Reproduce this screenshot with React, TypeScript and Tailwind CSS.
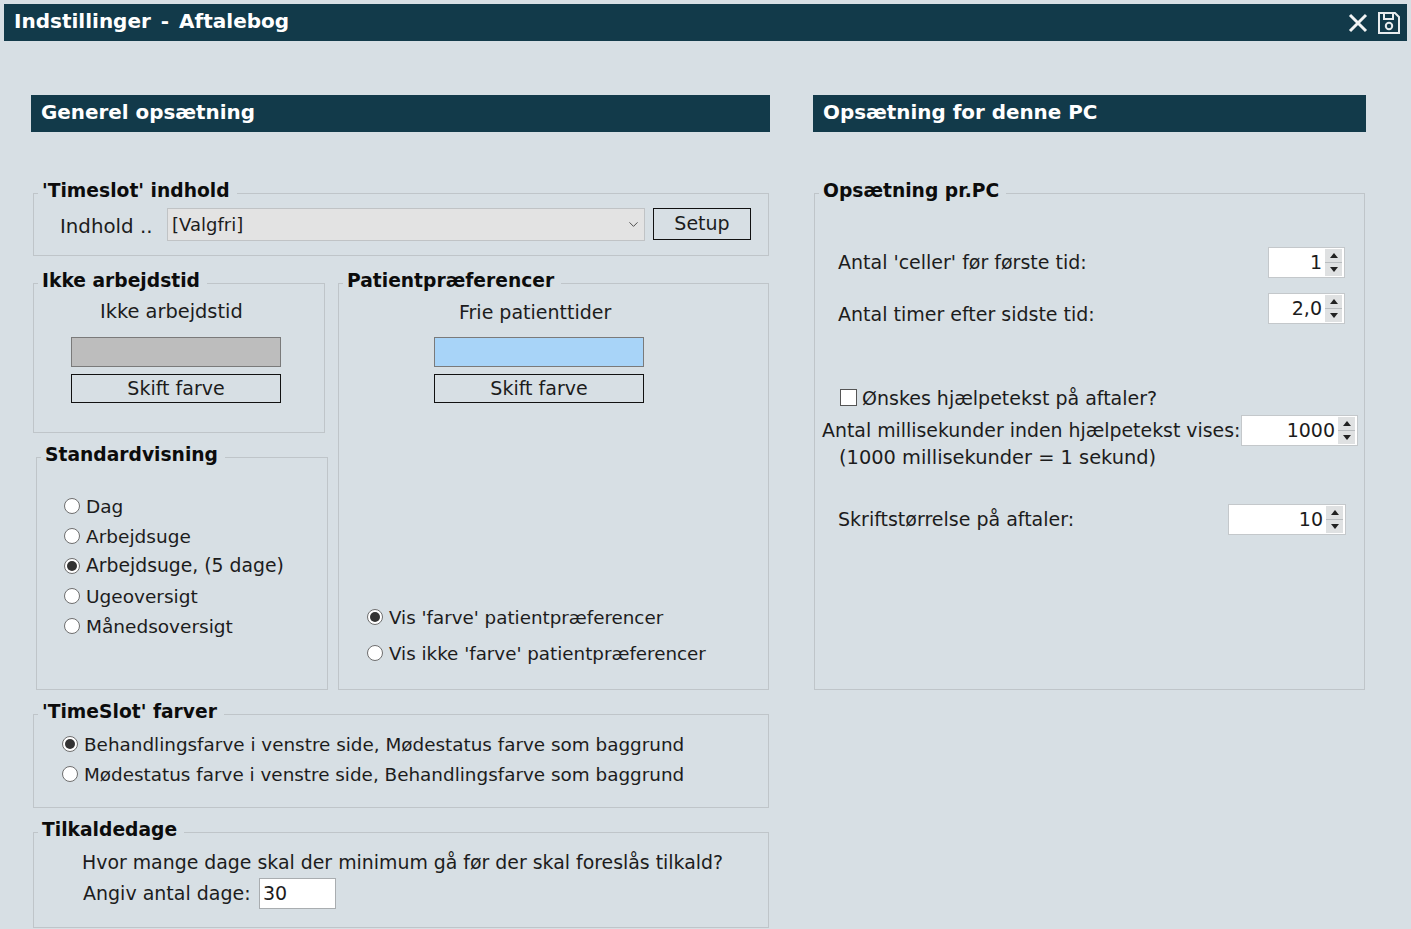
import React from 'react';
import { ChevronDown } from 'lucide-react';

const Group: React.FC<{ title: string; className: string; children?: React.ReactNode }> = ({ title, className, children }) => (
  <fieldset className={`min-w-0 border border-[#bfc5c9] ${className}`}>
    <legend className="ml-[4px] pl-[4px] pr-[7px] h-[24px] leading-[20px] font-bold text-[#0c0c0c] text-[18.7px]">{title}</legend>
    {children}
  </fieldset>
);

const SectionHeader: React.FC<{ title: string }> = ({ title }) => (
  <div className="h-[37px] bg-[#123a4a] text-white font-bold text-[19.9px] leading-[36px] pl-[10px]">{title}</div>
);

const Radio: React.FC<{ label: string; checked?: boolean; className?: string }> = ({ label, checked, className = '' }) => (
  <div className={`flex items-center h-[30px] ${className}`}>
    <span className="w-[16px] h-[16px] rounded-full bg-white border border-[#6e6e6e] flex items-center justify-center mr-[6px]">
      {checked && <span className="w-[10px] h-[10px] rounded-full bg-[#333]" />}
    </span>
    <span className="mt-[1px]">{label}</span>
  </div>
);

const ColorPicker: React.FC<{ label: string; color: string; className: string; labelClass: string }> = ({ label, color, className, labelClass }) => (
  <div className={className}>
    <div className={`h-[24px] leading-[24px] ${labelClass}`}>{label}</div>
    <div className={`w-[210px] h-[30px] mt-[13px] border border-[#7a7a7a] ${color}`} />
    <div className="w-[210px] h-[29px] mt-[7px] border border-[#111] text-center leading-[27px]">Skift farve</div>
  </div>
);

const Spinner: React.FC<{ value: string; className: string }> = ({ value, className }) => (
  <div className={`h-[31px] bg-white border border-[#c4c8cb] flex items-center justify-end pr-[2px] ${className}`}>
    <span className="mr-[3px]">{value}</span>
    <div className="w-[17px] h-[27px] flex flex-col gap-[1px] bg-[#b9bdc0]">
      <div className="flex-1 bg-[#dfe1e2] flex items-center justify-center">
        <span className="w-0 h-0 border-x-[4px] border-x-transparent border-b-[5px] border-b-[#222]" />
      </div>
      <div className="flex-1 bg-[#dfe1e2] flex items-center justify-center">
        <span className="w-0 h-0 border-x-[4px] border-x-transparent border-t-[5px] border-t-[#222]" />
      </div>
    </div>
  </div>
);

const App: React.FC = () => {
  return (
    <div className="w-[1411px] h-[929px] overflow-hidden bg-[#d7dfe4] text-[#1c1c1c] text-[19px] font-['DejaVu_Sans',sans-serif] pt-[4px] px-[4px]">
      {/* Title bar */}
      <div className="h-[37px] bg-[#123a4a] text-white flex items-center pl-[10px] pr-[6px]">
        <span className="font-bold text-[20px] [word-spacing:3px] flex-1 -mt-[3px]">Indstillinger - Aftalebog</span>
        <svg width="22" height="22" viewBox="0 0 22 22" fill="none" stroke="#f2f4f5" strokeWidth="3" className="mr-[8px]">
          <path d="M3 3 L19 19 M19 3 L3 19" />
        </svg>
        <svg width="24" height="24" viewBox="0 0 24 24" fill="none" stroke="#e8ecee" strokeWidth="2">
          <path d="M2 2 H18 L22 6 V22 H2 Z" />
          <path d="M7 2 V8 H16 V2" />
          <circle cx="12" cy="15" r="3.2" />
        </svg>
      </div>

      <div className="flex ml-[27px] mt-[54px]">
        {/* Left column */}
        <div className="w-[739px]">
          <SectionHeader title="Generel opsætning" />

          <Group title="'Timeslot' indhold" className="ml-[2px] w-[736px] h-[75px] mt-[49px]">
            <div className="flex items-start mt-[3px]">
              <span className="ml-[26px] w-[107px] mt-[7px] leading-[24px] text-[19.8px]">Indhold ..</span>
              <div className="w-[478px] h-[33px] bg-[#e3e3e3] border border-[#c0c3c5] flex items-center justify-between pl-[4px] pr-[3px]">
                <span className="-mt-[1px] text-[18px]">[Valgfri]</span>
                <ChevronDown size={15} strokeWidth={1.5} className="text-[#444]" />
              </div>
              <div className="w-[98px] h-[32px] ml-[8px] border border-[#111] text-center leading-[29px]">Setup</div>
            </div>
          </Group>

          <div className="flex mt-[15px]">
            <div className="w-[307px]">
              <Group title="Ikke arbejdstid" className="ml-[2px] w-[292px] h-[162px]">
                <ColorPicker label="Ikke arbejdstid" color="bg-[#bdbdbd]" className="ml-[37px]" labelClass="ml-[29px] mt-[5px] text-[19.4px]" />
              </Group>
              <Group title="Standardvisning" className="ml-[5px] w-[292px] h-[245px] mt-[12px]">
                <div className="ml-[27px] mt-[22px] text-[18.5px]">
                  <Radio label="Dag" />
                  <Radio label="Arbejdsuge" />
                  <Radio label="Arbejdsuge, (5 dage)" checked className="text-[18.8px]" />
                  <Radio label="Ugeoversigt" />
                  <Radio label="Månedsoversigt" />
                </div>
              </Group>
            </div>
            <Group title="Patientpræferencer" className="w-[431px] h-[419px]">
              <ColorPicker label="Frie patienttider" color="bg-[#a8d4f8]" className="ml-[95px]" labelClass="ml-[25px] mt-[5px]" />
              <div className="ml-[28px] mt-[196px] text-[18.3px]">
                <Radio label="Vis 'farve' patientpræferencer" checked className="h-[36px]" />
                <Radio label="Vis ikke 'farve' patientpræferencer" className="h-[36px]" />
              </div>
            </Group>
          </div>

          <Group title="'TimeSlot' farver" className="ml-[2px] w-[736px] h-[106px] mt-[12px]">
            <div className="ml-[28px] mt-[3px] text-[18.36px]">
              <Radio label="Behandlingsfarve i venstre side, Mødestatus farve som baggrund" checked />
              <Radio label="Mødestatus farve i venstre side, Behandlingsfarve som baggrund" />
            </div>
          </Group>

          <Group title="Tilkaldedage" className="ml-[2px] w-[736px] h-[108px] mt-[12px]">
            <div className="ml-[48px] mt-[3px] leading-[30px] text-[18.9px]">Hvor mange dage skal der minimum gå før der skal foreslås tilkald?</div>
            <div className="flex items-center ml-[49px] mt-[1px]">
              <span className="w-[176px]">Angiv antal dage:</span>
              <div className="w-[77px] h-[31px] bg-white border border-[#a9adb0] pl-[3px] leading-[28px]">30</div>
            </div>
          </Group>
        </div>

        {/* Right column */}
        <div className="w-[553px] ml-[43px]">
          <SectionHeader title="Opsætning for denne PC" />

          <Group title="Opsætning pr.PC" className="ml-[1px] w-[551px] h-[509px] mt-[49px]">
            <div className="flex items-center justify-between ml-[23px] mr-[19px] mt-[42px]">
              <span>Antal 'celler' før første tid:</span>
              <Spinner value="1" className="w-[77px]" />
            </div>
            <div className="flex items-center justify-between ml-[23px] mr-[19px] mt-[10px]">
              <span className="mt-[12px]">Antal timer efter sidste tid:</span>
              <Spinner value="2,0" className="w-[77px]" />
            </div>
            <div className="flex items-center ml-[25px] mt-[55px]">
              <span className="w-[17px] h-[17px] bg-white border border-[#555] mr-[5px]" />
              <span>Ønskes hjælpetekst på aftaler?</span>
            </div>
            <div className="flex items-center ml-[7px] mt-[3px]">
              <span className="w-[419px] shrink-0 whitespace-nowrap text-[18.9px]">Antal millisekunder inden hjælpetekst vises:</span>
              <Spinner value="1000" className="w-[117px]" />
            </div>
            <div className="ml-[24px] leading-[24px] text-[19.4px]">(1000 millisekunder = 1 sekund)</div>
            <div className="flex items-center justify-between ml-[23px] mr-[18px] mt-[34px]">
              <span>Skriftstørrelse på aftaler:</span>
              <Spinner value="10" className="w-[118px]" />
            </div>
          </Group>
        </div>
      </div>
    </div>
  );
};

export default App;
